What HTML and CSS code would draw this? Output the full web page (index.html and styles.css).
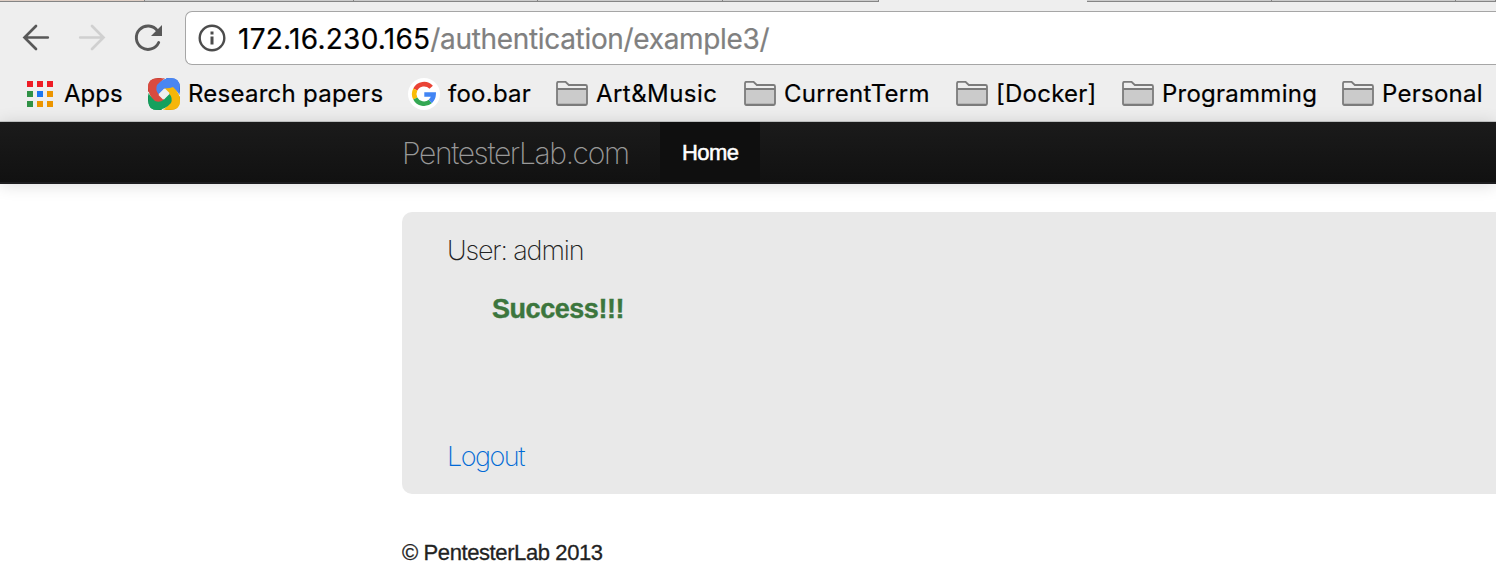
FILE: index.html
```html
<!DOCTYPE html>
<html lang="en">
<head>
<meta charset="utf-8">
<title>PentesterLab.com</title>
<link rel="stylesheet" href="styles.css">
</head>
<body>
<svg class="defs" width="0" height="0" aria-hidden="true">
  <symbol id="folder" viewBox="0 0 32 26">
    <path d="M1 2.500Q1 1 2.500 1H9.500L12.500 4H29.500Q31 4 31 5.500V7.500H1Z" fill="#eee"/>
    <path d="M1 8H31V24.500H1Z" fill="#cbcbcb"/>
    <path d="M2 22H30V24H2Z" fill="#b5b5b5"/>
    <path d="M1 2.400Q1 .8 2.500 .8H9.500L12.800 4H29.500Q31 4 31 5.500V22.500Q31 24 29.500 24H2.500Q1 24 1 22.500ZM1 8H31" fill="none" stroke="#7b7b7b" stroke-width="1.800"/>
  </symbol>
</svg>
<div class="browser">
  <div class="tabs"><i class="t1"></i><i class="t2"></i><i class="t3"></i><i class="t4"></i><i class="t5"></i><i class="active"></i><i class="t6"></i><i class="t7"></i><i class="t8"></i></div>
  <div class="toolbar">
    <div class="controls">
      <svg width="185" height="56" viewBox="0 10 185 56" fill="none">
        <path d="M47.800 37.500H24.500M36 26L24.500 37.500L36 49" stroke="#585858" stroke-width="2.700" stroke-linecap="round"/>
        <path d="M80.200 37.500H103.500M92 26L103.500 37.500L92 49" stroke="#d0d0d0" stroke-width="2.700" stroke-linecap="round"/>
        <path d="M158.700 42.500A11.700 11.700 0 1 1 157.500 30.800" stroke="#585858" stroke-width="2.900" stroke-linecap="round"/>
        <path d="M162 25V36H151Z" fill="#585858"/>
      </svg>
    </div>
    <div class="address">
      <svg class="info" width="28" height="28" viewBox="0 0 28 28"><circle cx="14" cy="14" r="12.300" fill="none" stroke="#4c4c4c" stroke-width="2.400"/><path d="M12.500 7.500H15.500V10.500H12.500ZM12.500 12.500H15.500V20.500H12.500Z" fill="#4c4c4c"/></svg>
      <span class="url"><span class="host">172.16.230.165</span><span class="path">/authentication/example3/</span></span>
    </div>
  </div>
  <div class="bookmarks">
    <div class="mark apps"><svg width="26" height="26" viewBox="0 0 26 26"><path d="M0 0h6v6H0zM10 0h6v6h-6zM20 0h6v6h-6z" fill="#ee1c25"/><path d="M0 10h6v6H0zM0 20h6v6H0z" fill="#2f9145"/><path d="M10 10h6v6h-6z" fill="#1b76f2"/><path d="M20 10h6v6h-6zM10 20h6v6h-6zM20 20h6v6h-6z" fill="#ec9500"/></svg><span>Apps</span></div>
    <div class="mark research"><svg width="32" height="32" viewBox="0 0 32 32">
      <path d="M0 10Q0 0 10 0H14L8 8L0 14Z" fill="#b9372d"/>
      <path d="M18 0H22Q32 0 32 10V15L24 8Z" fill="#2b62cf"/>
      <path d="M32 18V22Q32 32 22 32H17L24 24Z" fill="#d99b00"/>
      <path d="M14 32H10Q0 32 0 22V17L8 24Z" fill="#0c804b"/>
      <path id="band" d="M9 7Q15 0 23 0Q31 0 31.500 8L31.700 17Q28 11 22 10L16 10.500L10.500 16Q7 12 9 7Z" fill="#4a86f1"/>
      <path d="M9 7Q15 0 23 0Q31 0 31.500 8L31.700 17Q28 11 22 10L16 10.500L10.500 16Q7 12 9 7Z" fill="#f6b60a" transform="rotate(90 16 16)"/>
      <path d="M9 7Q15 0 23 0Q31 0 31.500 8L31.700 17Q28 11 22 10L16 10.500L10.500 16Q7 12 9 7Z" fill="#14a05d" transform="rotate(180 16 16)"/>
      <path d="M9 7Q15 0 23 0Q31 0 31.500 8L31.700 17Q28 11 22 10L16 10.500L10.500 16Q7 12 9 7Z" fill="#d94b40" transform="rotate(270 16 16)"/>
      <path d="M9 7Q15 0 23 0L25 9L22 10L16 10.500L10.500 16Q7 12 9 7Z" fill="#4a86f1"/>
      <path d="M17 10.500L21.500 15L15 21.500L10.500 17Z" fill="#eee"/>
    </svg><span>Research papers</span></div>
    <div class="mark foo"><svg width="32" height="32" viewBox="0 0 32 32"><circle cx="16" cy="16" r="16" fill="#fff"/><g fill="none" stroke-width="4.600"><path d="M23.200 9.200A9.800 9.800 0 0 0 7.300 11.500" stroke="#ea4335"/><path d="M7.300 11.500A9.800 9.800 0 0 0 7.300 20.500" stroke="#fbbc05"/><path d="M7.300 20.500A9.800 9.800 0 0 0 22.300 23.500" stroke="#34a853"/><path d="M22.300 23.500A9.800 9.800 0 0 0 25.600 16.500H16.300" stroke="#4285f4"/></g></svg><span>foo.bar</span></div>
    <div class="mark art"><svg width="32" height="26"><use href="#folder"/></svg><span>Art&amp;Music</span></div>
    <div class="mark term"><svg width="32" height="26"><use href="#folder"/></svg><span>CurrentTerm</span></div>
    <div class="mark docker"><svg width="32" height="26"><use href="#folder"/></svg><span>[Docker]</span></div>
    <div class="mark prog"><svg width="32" height="26"><use href="#folder"/></svg><span>Programming</span></div>
    <div class="mark personal"><svg width="32" height="26"><use href="#folder"/></svg><span>Personal</span></div>
  </div>
</div>
<nav class="navbar"><a class="brand">PentesterLab.com</a><a class="home"><span>Home</span></a></nav>
<main class="content">
  <section class="hero">
    <p class="user"><span>User: admin</span></p>
    <p class="success"><span>Success!!!</span></p>
    <p class="logout"><a>Logout</a></p>
  </section>
  <footer><span>© PentesterLab 2013</span></footer>
</main>
</body>
</html>
```
FILE: styles.css
```css
* { box-sizing: border-box; }
body { margin: 0; width: 1496px; height: 584px; overflow: hidden; background: #fff; font-family: "Liberation Sans", Arial, sans-serif; color: #222; }
.defs { display: none; }
.browser { height: 122px; background: #eee; border-bottom: 1px solid #c7c9c9; font-family: Inter, "Open Sans", sans-serif; color: #000; }
.tabs { display: flex; height: 2px; }
.tabs i { background: #cbcbcb; border-bottom: 1px solid #858585; border-right: 1px solid #858585; height: 2px; }
.tabs .t1 { width: 145px; background: #dfcfc5; }
.tabs .t2 { width: 209px; }
.tabs .t3 { width: 184px; }
.tabs .t4 { width: 185px; }
.tabs .t5 { width: 156px; }
.tabs .active { width: 208px; background: #eee; border: 0; }
.tabs .t6 { width: 185px; }
.tabs .t7 { width: 184px; }
.tabs .t8 { flex: 1; }
.toolbar { display: flex; height: 64px; padding-top: 9px; }
.controls { width: 185px; height: 55px; margin-top: -1px; }
.address { flex: 1; height: 54px; display: flex; align-items: center; background: #fff; border: 1px solid #a6a6a6; border-right: 0; border-radius: 7px 0 0 7px; padding-left: 12px; }
.url { margin-left: 12px; padding-top: 2px; font-size: 28px; line-height: 40px; white-space: nowrap; -webkit-text-stroke: .2px; }
.host { letter-spacing: .27px; }
.path { color: #808080; letter-spacing: -.33px; }
.bookmarks { display: grid; grid-template-columns: 121px 260px 148px 188px 212px 166px 220px auto; padding-left: 27px; height: 55px; align-items: center; }
.mark { display: flex; align-items: center; font-size: 24px; line-height: 32px; white-space: nowrap; letter-spacing: .25px; -webkit-text-stroke: .2px; }
.mark svg { margin-right: 8px; flex: none; -webkit-text-stroke: 0; }
.apps { letter-spacing: 0; }
.apps svg { margin-right: 11px; }
.art { letter-spacing: .45px; }
.navbar { display: flex; height: 62px; padding-left: 402px; background: linear-gradient(#1b1b1b, #111); border-bottom: 2px solid #1d1d1f; box-shadow: 0 1px 16px rgba(0,0,0,.14); }
.brand { width: 258px; font: 200 30px/62px Inter, sans-serif; color: #999; letter-spacing: -1.350px; white-space: nowrap; }
.home { width: 100px; padding: 1px 0 0 22px; background: #0f0f0f; color: #fff; font-size: 22px; line-height: 60px; letter-spacing: -.6px; -webkit-text-stroke: .5px #fff; }
.content { padding: 28px 0 0 402px; }
.hero { height: 282px; background: #e9e9e9; border-radius: 10px 0 0 10px; padding: 21px 45px; }
.hero p { margin: 0; font-size: 27px; line-height: 36px; white-space: nowrap; }
.user, .logout { font-family: Inter, sans-serif; font-weight: 200; letter-spacing: -1.150px; }
.hero .success { margin: 22px 0 112px 45px; color: #3c763d; font-weight: 700; letter-spacing: -.45px; -webkit-text-stroke: .4px; }
.logout { color: #0069d6; letter-spacing: -1.500px; }
footer { padding-top: 45px; font-size: 22px; line-height: 28px; letter-spacing: -.4px; -webkit-text-stroke: .3px #222; }
```
